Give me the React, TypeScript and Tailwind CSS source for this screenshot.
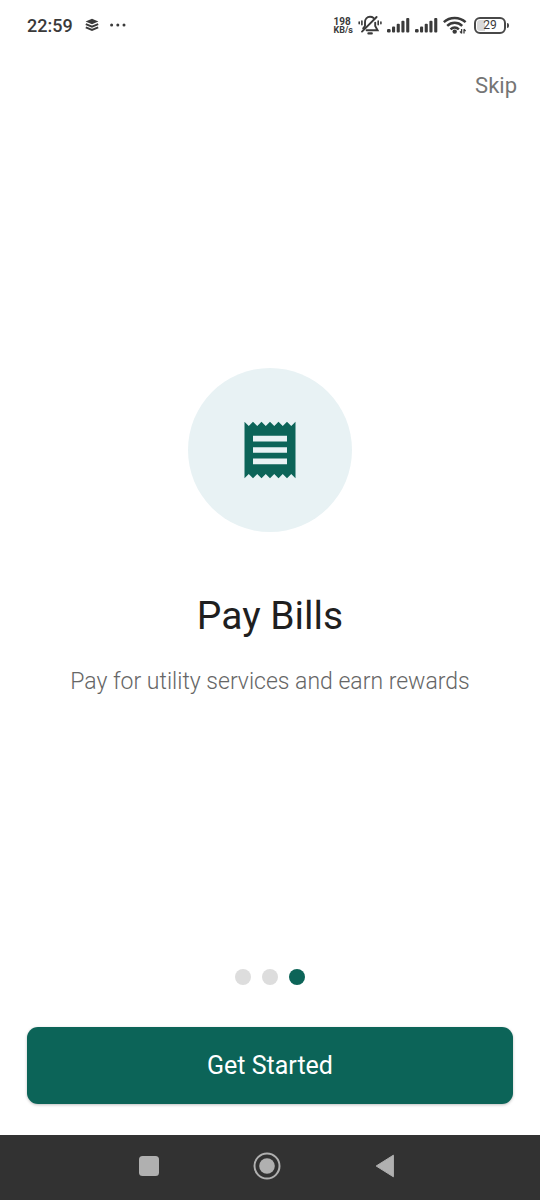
import type { ReactNode } from "react";

function LayersIcon() {
  return (
    <svg className="h-[14px] w-[14px]" viewBox="0 0 14 14" aria-hidden="true">
      <path fill="#3a3a3a" d="M7 .8 13.4 3.4 7 6.2.6 3.4Z" />
      <path
        fill="none"
        stroke="#3a3a3a"
        strokeWidth="1.9"
        d="M.8 6.2 7 8.7 13.2 6.2M.8 9.4 7 11.9 13.2 9.4"
      />
    </svg>
  );
}

function MoreIcon() {
  return (
    <svg className="h-[4px] w-[18px]" viewBox="0 0 18 4" aria-hidden="true" fill="#3a3a3a">
      <circle cx="2.6" cy="2" r="1.5" />
      <circle cx="8.8" cy="2" r="1.5" />
      <circle cx="15" cy="2" r="1.5" />
    </svg>
  );
}

function SilentIcon() {
  return (
    <svg
      className="h-[20px] w-[24px]"
      viewBox="0 0 24 20"
      aria-hidden="true"
      fill="none"
      stroke="#3a3a3a"
      strokeWidth="1.9"
      strokeLinecap="round"
    >
      <path d="M15.6 3C14.6 2.2 13.4 1.8 12 1.8 9 1.8 7 4.2 7 7.3V11L5.2 13.4" />
      <path d="M17.2 7.6V11L19.6 15.2H8.6" />
      <path d="M18.6 2 4 16.6" />
      <path strokeWidth="2.2" d="M10.4 18.4H13.8" />
      <path strokeWidth="1.6" d="M3.9 6V9.8M1.2 7V8.8M20.2 6V9.8M22.9 7V8.8" />
    </svg>
  );
}

function SignalIcon() {
  return (
    <svg className="h-[16px] w-[23px]" viewBox="0 0 23 16" aria-hidden="true" fill="#3a3a3a">
      <rect x="0" y="12" width="3.6" height="3.4" rx="1.2" />
      <rect x="5" y="9.6" width="3.1" height="5.8" rx="1" />
      <rect x="9.7" y="6.8" width="3.1" height="8.6" rx="1" />
      <rect x="14.4" y="3.8" width="3.1" height="11.6" rx="1" />
      <rect x="19.2" y="1" width="3.1" height="14.4" rx="1" />
    </svg>
  );
}

function WifiIcon() {
  return (
    <svg className="h-[18px] w-[24px]" viewBox="0 0 24 18" aria-hidden="true">
      <g fill="none" stroke="#3a3a3a" strokeWidth="2.5">
        <path d="M.8 6.1C6.8.5 16.6.5 22.6 6.1" />
        <path d="M4.2 9.8C8.5 5.8 14.9 5.8 19.2 9.8" />
        <path d="M7.5 13.3C10 11 13.4 11 15.9 13.3" />
      </g>
      <circle cx="11.7" cy="15.6" r="2.2" fill="#3a3a3a" />
      <path
        fill="none"
        stroke="#3a3a3a"
        strokeWidth="1.3"
        d="M18.6 13V17.4M17 15.4 18.6 17.4M21 17.6V13.2M22.6 15.2 21 13.2"
      />
    </svg>
  );
}

function Battery({ level }: { level: number }) {
  return (
    <div className="flex items-center gap-px" role="img" aria-label={`Battery ${level}%`}>
      <div className="relative flex h-[17px] w-[32px] items-center justify-center overflow-hidden rounded-[6px] border-2 border-[#484848]">
        <span
          className="absolute inset-y-px left-px rounded-l-[3px] bg-[#d9d9d9]"
          style={{ width: `${level}%` }}
        />
        <span className="relative text-[12px] leading-[13px] text-[#3a3a3a]">{level}</span>
      </div>
      <span className="h-[5px] w-[2px] rounded-r-full bg-[#484848]" />
    </div>
  );
}

function StatusBar() {
  return (
    <div className="flex h-[50px] items-center justify-between pr-[31px] pl-[27px] text-[#3a3a3a]">
      <div className="flex items-center">
        <span className="pt-[2px] text-[18px] leading-5 font-medium">22:59</span>
        <span className="ml-[12px]">
          <LayersIcon />
        </span>
        <span className="ml-[10px]">
          <MoreIcon />
        </span>
      </div>
      <div className="flex items-center gap-[5px]">
        <div className="pt-[2px] text-[9px] leading-[9px] font-bold">
          <div className="text-[10px]">198</div>
          <div>KB/s</div>
        </div>
        <SilentIcon />
        <SignalIcon />
        <SignalIcon />
        <WifiIcon />
        <div className="ml-[2px]">
          <Battery level={29} />
        </div>
      </div>
    </div>
  );
}

function ReceiptIcon() {
  return (
    <svg className="h-[68px] w-[68px]" viewBox="0 0 24 24" aria-hidden="true" fill="#0c6458">
      <path d="M18 17H6v-2h12v2zm0-4H6v-2h12v2zm0-4H6V7h12v2zM3 22l1.5-1.5L6 22l1.5-1.5L9 22l1.5-1.5L12 22l1.5-1.5L15 22l1.5-1.5L18 22l1.5-1.5L21 22V2l-1.5 1.5L18 2l-1.5 1.5L15 2l-1.5 1.5L12 2l-1.5 1.5L9 2 7.5 3.5 6 2 4.5 3.5 3 2v20z" />
    </svg>
  );
}

function PageDots({ count, active }: { count: number; active: number }) {
  return (
    <div className="flex justify-center gap-[11px]">
      {Array.from({ length: count }, (_, i) => (
        <span
          key={i}
          className={
            i === active
              ? "h-[16px] w-[16px] rounded-full bg-[#0c6458]"
              : "h-[16px] w-[16px] rounded-full bg-[#dddddd]"
          }
        />
      ))}
    </div>
  );
}

function NavButton({ label, children }: { label: string; children: ReactNode }) {
  return (
    <button type="button" aria-label={label} className="flex h-full w-[118px] items-center justify-center">
      {children}
    </button>
  );
}

function NavigationBar() {
  return (
    <nav className="flex h-[65px] justify-center bg-[#323232] pr-[6px] pb-[4px]">
      <NavButton label="Recent apps">
        <svg className="h-[20px] w-[20px]" viewBox="0 0 20 20">
          <rect width="20" height="20" rx="3.5" fill="#b0b0b0" />
        </svg>
      </NavButton>
      <NavButton label="Home">
        <svg className="h-[28px] w-[28px]" viewBox="0 0 28 28">
          <circle cx="14" cy="14" r="12.5" fill="none" stroke="#b0b0b0" strokeWidth="2" />
          <circle cx="14" cy="14" r="7.8" fill="#b0b0b0" />
        </svg>
      </NavButton>
      <NavButton label="Back">
        <svg className="h-[24px] w-[20px]" viewBox="0 0 20 24">
          <path
            d="M1.2 12 18.4 1.2V22.8Z"
            fill="#b0b0b0"
            stroke="#b0b0b0"
            strokeWidth="1"
            strokeLinejoin="round"
          />
        </svg>
      </NavButton>
    </nav>
  );
}

export default function App() {
  return (
    <div className="flex min-h-screen flex-col bg-white font-[Roboto,sans-serif]">
      <StatusBar />
      <header className="flex h-[72px] items-center justify-end px-[23px]">
        <button type="button" className="text-[22px] leading-8 text-[#757575]">
          Skip
        </button>
      </header>
      <main className="flex flex-1 flex-col items-center justify-center px-6 text-center">
        <div className="flex h-[164px] w-[164px] items-center justify-center rounded-full bg-[#e8f2f4]">
          <ReceiptIcon />
        </div>
        <h1 className="mt-[62px] text-[39px] leading-[44px] text-[#1f1f1f]">Pay Bills</h1>
        <p className="mt-[28px] text-[23px] leading-8 font-light text-[#666666]">
          Pay for utility services and earn rewards
        </p>
      </main>
      <footer className="px-[27px] pt-[25px] pb-[31px]">
        <PageDots count={3} active={2} />
        <button
          type="button"
          className="mt-[42px] h-[77px] w-full rounded-[11px] bg-[#0c6458] text-[25px] text-white shadow-[0_1px_3px_rgba(0,0,0,0.25)]"
        >
          Get Started
        </button>
      </footer>
      <NavigationBar />
    </div>
  );
}
